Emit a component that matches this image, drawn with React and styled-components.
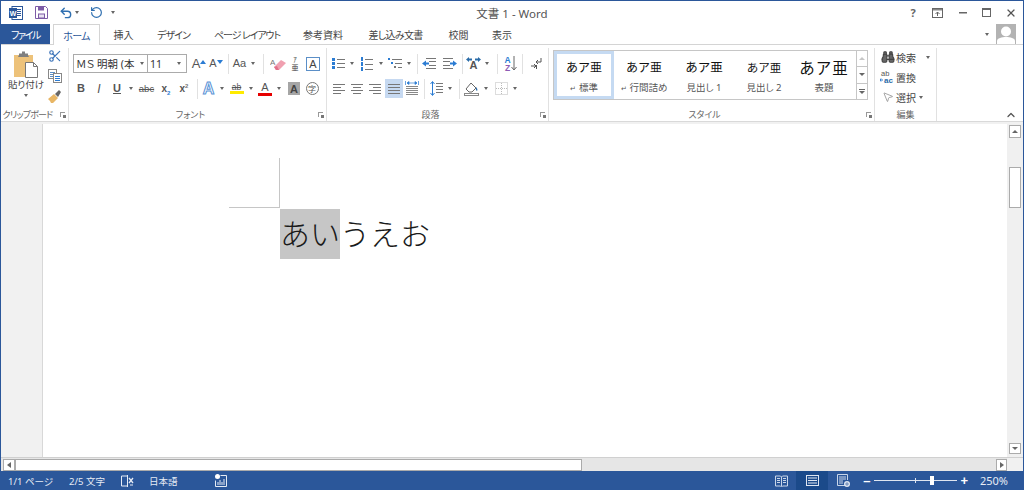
import styled, { createGlobalStyle } from "styled-components";
import { Scissors, Binoculars, MousePointer2, Undo2, RotateCcw, ChevronUp, X } from "lucide-react";

const BLUE = "#2b579a";
const SANS = `"Noto Sans", "Noto Sans CJK JP", sans-serif`;
const JP = `"Noto Sans CJK JP", sans-serif`;

const Global = createGlobalStyle`
  html, body { margin: 0; padding: 0; height: 100%; overflow: hidden; }
  body { font-family: ${SANS}; font-feature-settings: "palt"; color: #444; }
  #root { height: 100%; }
`;

const Win = styled.div`
  height: 490px;
  box-sizing: border-box;
  border: 1px solid ${BLUE};
  border-bottom: 0;
  display: flex;
  flex-direction: column;
  background: #fff;
`;

/* title bar */
const TitleBar = styled.div`
  height: 23px;
  flex: none;
  display: grid;
  grid-template-columns: 1fr auto 1fr;
  align-items: center;
`;
const Qat = styled.div`
  display: flex;
  align-items: center;
  padding-left: 8px;
`;
const Title = styled.div`
  font-size: 11.5px;
  color: #555;
`;
const WinBtns = styled.div`
  display: flex;
  justify-content: flex-end;
  align-items: center;
`;
const Cell = styled.div`
  width: ${(p) => p.$w || 18}px;
  height: ${(p) => p.$h || 19}px;
  margin-left: ${(p) => p.$ml || 0}px;
  flex: none;
  display: flex;
  align-items: center;
  justify-content: center;
  background: ${(p) => (p.$on ? "#c6d9f1" : "transparent")};
`;
const Help = styled.span`
  font-size: 11px;
  font-weight: 700;
  color: #666;
`;

/* tabs */
const TabRow = styled.div`
  height: 21px;
  flex: none;
  box-sizing: border-box;
  display: flex;
  border-bottom: 1px solid #d4d4d4;
`;
const FileTab = styled.div`
  width: 49px;
  height: 20px;
  background: ${BLUE};
  color: #fff;
  font-size: 10px;
  letter-spacing: -1.4px;
  display: flex;
  align-items: center;
  justify-content: center;
  margin-right: 3px;
`;
const Tab = styled.div`
  width: ${(p) => p.$w}px;
  height: ${(p) => (p.$active ? 21 : 20)}px;
  box-sizing: border-box;
  font-size: 10px;
  letter-spacing: ${(p) => p.$ls || 0}px;
  white-space: nowrap;
  display: flex;
  align-items: center;
  justify-content: center;
  color: ${(p) => (p.$active ? BLUE : "#444")};
  background: #fff;
  ${(p) => p.$active && `border: 1px solid #d4d4d4; border-bottom: 0;`}
`;
const Account = styled.div`
  margin-left: auto;
  display: flex;
  align-items: flex-start;
  gap: 6px;
  padding-right: 7px;
`;
const Avatar = styled.div`
  width: 20px;
  height: 20px;
  background: #b3b3b3;
  overflow: hidden;
`;

/* ribbon */
const Ribbon = styled.div`
  height: 77px;
  flex: none;
  box-sizing: border-box;
  display: flex;
  align-items: flex-start;
  border-bottom: 1px solid #d9d9d9;
`;
const Strip = styled.div`
  height: 2px;
  flex: none;
  background: #f1f1f1;
`;
const Group = styled.div`
  width: ${(p) => p.$w}px;
  height: 73px;
  margin-top: 3px;
  flex: none;
  box-sizing: border-box;
  border-right: 1px solid #e1e1e1;
  display: flex;
  flex-direction: column;
`;
const Body = styled.div`
  flex: 1;
  min-height: 0;
  display: flex;
  flex-direction: ${(p) => p.$dir || "column"};
  padding-top: ${(p) => p.$pt ?? 6}px;
  padding-left: ${(p) => p.$pl || 0}px;
  gap: ${(p) => p.$gap || 0}px;
`;
const GroupLabel = styled.div`
  height: 12px;
  flex: none;
  position: relative;
  box-sizing: border-box;
  padding-right: ${(p) => (p.$launcher ? 14 : 0)}px;
  font-size: 9px;
  line-height: 12px;
  letter-spacing: ${(p) => p.$ls || 0}px;
  color: #666;
  text-align: center;
  white-space: nowrap;
`;
const Launcher = styled.span`
  position: absolute;
  right: 3px;
  top: 3px;
  width: 5px;
  height: 5px;
  box-sizing: border-box;
  border-left: 1px solid #999;
  border-top: 1px solid #999;
  &::after {
    content: "";
    position: absolute;
    right: -1px;
    bottom: -1px;
    width: 3px;
    height: 3px;
    background: #777;
  }
`;
const ToolRow = styled.div`
  height: 19px;
  display: flex;
  align-items: center;
  padding-left: ${(p) => p.$pl || 0}px;
  margin-bottom: ${(p) => p.$mb || 0}px;
`;
const Sep = styled.div`
  width: 1px;
  height: 20px;
  flex: none;
  background: #e1e1e1;
  margin-left: ${(p) => p.$ml || 0}px;
`;
const Drop = styled.div`
  width: ${(p) => p.$w || 6}px;
  margin-left: ${(p) => p.$ml || 0}px;
  flex: none;
  display: flex;
  justify-content: center;
  &::after {
    content: "";
    border-left: 2.5px solid transparent;
    border-right: 2.5px solid transparent;
    border-top: 3px solid #666;
  }
`;
const Combo = styled.div`
  width: ${(p) => p.$w}px;
  height: 19px;
  flex: none;
  box-sizing: border-box;
  border: 1px solid #ababab;
  margin-left: ${(p) => p.$ml || 0}px;
  display: flex;
  align-items: center;
  justify-content: space-between;
  padding: 0 2px;
  font-size: 10.5px;
  color: #333;
  white-space: nowrap;
`;
const Letter = styled.span`
  font-family: "Liberation Sans", sans-serif;
  font-size: ${(p) => p.$s || 11}px;
  font-weight: ${(p) => p.$b || 400};
  font-style: ${(p) => (p.$i ? "italic" : "normal")};
  color: ${(p) => p.$c || "#555"};
  text-decoration: ${(p) => p.$d || "none"};
  line-height: 1;
`;
const OutlineA = styled.span`
  font-family: "Liberation Sans", sans-serif;
  font-size: 16px;
  font-weight: 700;
  line-height: 1;
  color: #fff;
  -webkit-text-stroke: 1px #5b93d6;
`;
const Raised = styled.sup`
  font-size: 6px;
  color: ${(p) => p.$c || "#777"};
  line-height: 0;
  vertical-align: ${(p) => p.$v || "super"};
`;
const ColorA = styled.span`
  width: 14px;
  display: flex;
  flex-direction: column;
  align-items: center;
  font-family: "Liberation Sans", sans-serif;
  font-size: 11px;
  line-height: 11px;
  color: #555;
  &::after {
    content: "";
    width: 14px;
    height: 3px;
    background: ${(p) => p.$c};
  }
`;
const BoxA = styled.span`
  width: 14px;
  height: 14px;
  box-sizing: border-box;
  border: 1px solid #5b8fc7;
  display: flex;
  align-items: center;
  justify-content: center;
  font-family: "Liberation Sans", sans-serif;
  font-size: 11px;
  color: #444;
`;
const ShadeA = styled(BoxA)`
  width: 12px;
  height: 13px;
  border: 0;
  background: #a6a6a6;
  font-weight: 700;
`;
const RingChar = styled.span`
  width: 13px;
  height: 13px;
  flex: none;
  box-sizing: border-box;
  border: 1px solid #777;
  border-radius: 50%;
  display: flex;
  align-items: center;
  justify-content: center;
  font-size: 8px;
  color: #555;
`;
const RubyChar = styled.span`
  font-size: 7px;
  line-height: 8px;
  text-align: center;
  color: #444;
  display: flex;
  flex-direction: column;
`;
const Grow = styled.span`
  align-self: flex-start;
  margin-top: 4px;
  line-height: 0;
`;

/* clipboard */
const PasteCol = styled.div`
  width: 44px;
  margin-left: 3px;
  display: flex;
  flex-direction: column;
  align-items: center;
  padding-top: 3px;
  flex: none;
`;
const PasteText = styled.div`
  font-size: 9.5px;
  line-height: 13px;
  color: #444;
  white-space: nowrap;
`;
const PasteDrop = styled(Drop)`
  margin-top: 3px;
`;
const SmallCol = styled.div`
  width: 14px;
  flex: none;
  display: flex;
  flex-direction: column;
  gap: 4px;
`;
const SmallCell = styled.div`
  height: 16px;
  display: flex;
  align-items: center;
  justify-content: center;
`;

/* styles gallery */
const Gallery = styled.div`
  width: 315px;
  height: 50px;
  box-sizing: border-box;
  border: 1px solid #c6c6c6;
  display: flex;
`;
const StyleCard = styled.div`
  width: 60px;
  flex: none;
  box-sizing: border-box;
  overflow: hidden;
  display: flex;
  flex-direction: column;
  align-items: center;
  font-feature-settings: normal;
  border: ${(p) => (p.$on ? "3px solid #c5daf2" : "3px solid transparent")};
`;
const Sample = styled.div`
  height: 25px;
  display: flex;
  align-items: center;
  white-space: nowrap;
  font-family: ${JP};
  font-weight: 400;
  color: #111;
  font-size: ${(p) => p.$s || 12}px;
  letter-spacing: ${(p) => p.$ls || 0}px;
`;
const StyleName = styled.div`
  margin-top: 2px;
  font-size: 9.5px;
  line-height: 14px;
  color: #555;
  white-space: nowrap;
  font-feature-settings: "palt";
`;
const Return = styled.span`
  font-size: 7px;
  margin-right: 3px;
`;
const GalleryScroll = styled.div`
  flex: 1;
  display: flex;
  flex-direction: column;
  margin-left: 2px;
  border-left: 1px solid #c6c6c6;
`;
const GalleryBtn = styled.div`
  flex: 1;
  display: flex;
  flex-direction: column;
  align-items: center;
  justify-content: center;
  border-bottom: ${(p) => (p.$last ? 0 : "1px solid #c6c6c6")};
`;
const Tri = styled.span`
  border-left: 3px solid transparent;
  border-right: 3px solid transparent;
  ${(p) => (p.$up ? `border-bottom: 3px solid ${p.$c || "#666"};` : `border-top: 3px solid ${p.$c || "#666"};`)}
`;
const MoreBar = styled.span`
  width: 6px;
  height: 1px;
  background: #666;
  margin-bottom: 1px;
`;

/* edit */
const EditRow = styled.div`
  height: 16px;
  display: flex;
  align-items: center;
  font-size: 10px;
  color: #444;
  white-space: nowrap;
`;
const EditIcon = styled.div`
  width: 21px;
  padding-left: 4px;
  box-sizing: border-box;
  display: flex;
  justify-content: center;
  flex: none;
`;
const Collapse = styled.div`
  flex: 1;
  align-self: flex-end;
  display: flex;
  justify-content: flex-end;
  padding-right: 6px;
`;

/* document */
const DocArea = styled.div`
  flex: 1;
  min-height: 0;
  display: flex;
`;
const Gutter = styled.div`
  width: 41px;
  flex: none;
  background: #f1f1f1;
  border-right: 1px solid #d8d8d8;
`;
const Page = styled.div`
  flex: 1;
  padding: 34px 0 0 186px;
`;
const CropMark = styled.div`
  width: 50px;
  height: 49px;
  border-right: 1px solid #c6c6c6;
  border-bottom: 1px solid #c6c6c6;
`;
const TextLine = styled.div`
  margin: 1px 0 0 51px;
  height: 50px;
  display: flex;
  align-items: center;
  font-family: ${JP};
  font-feature-settings: normal;
  font-weight: 300;
  font-size: 30px;
  color: #1a1a1a;
  white-space: nowrap;
`;
const Glyphs = styled.span`
  position: relative;
  top: -2px;
`;
const Selected = styled.span`
  background: #c6c6c6;
  height: 50px;
  display: flex;
  align-items: center;
`;
const VScroll = styled.div`
  width: 16px;
  flex: none;
  background: #f0f0f0;
  padding: 1px 2px 3px;
  box-sizing: border-box;
  display: flex;
  flex-direction: column;
`;
const SBtn = styled.div`
  width: ${(p) => p.$w || 12}px;
  height: ${(p) => p.$h || 12}px;
  flex: none;
  box-sizing: border-box;
  background: #fff;
  border: 1px solid #ababab;
  display: flex;
  align-items: center;
  justify-content: center;
`;
const VThumb = styled.div`
  height: 41px;
  margin-top: 29px;
  box-sizing: border-box;
  background: #fff;
  border: 1px solid #ababab;
`;
const Fill = styled.div`
  flex: 1;
`;
const HScroll = styled.div`
  height: 14px;
  flex: none;
  box-sizing: border-box;
  display: flex;
  align-items: center;
  background: #e6e6e6;
  padding-left: 2px;
  border-top: 1px solid #d0d0d0;
`;
const HThumb = styled.div`
  width: 567px;
  height: 12px;
  box-sizing: border-box;
  background: #fff;
  border: 1px solid #ababab;
  flex: none;
`;
const Corner = styled.div`
  width: 16px;
  height: 13px;
  flex: none;
  background: #f1f1f1;
`;
const TriSide = styled.span`
  border-top: 3px solid transparent;
  border-bottom: 3px solid transparent;
  ${(p) => (p.$left ? "border-right: 4px solid #666;" : "border-left: 4px solid #666;")}
`;

/* status bar */
const Status = styled.div`
  height: 19px;
  flex: none;
  background: ${BLUE};
  color: #e6ecf5;
  font-size: 9.5px;
  display: flex;
  align-items: center;
  padding-left: 7px;
  white-space: nowrap;
`;
const StatusText = styled.span`
  margin-left: ${(p) => p.$ml || 0}px;
  margin-right: ${(p) => p.$mr || 0}px;
  font-size: ${(p) => p.$s || 9.5}px;
`;
const StatusIcon = styled.div`
  margin-left: ${(p) => p.$ml || 0}px;
  width: ${(p) => p.$w || 14}px;
  height: 19px;
  flex: none;
  display: flex;
  align-items: center;
  justify-content: center;
  background: ${(p) => (p.$on ? "#1b4a8a" : "transparent")};
`;
const ZoomTrack = styled.div`
  width: 83px;
  height: 1px;
  margin-left: 4px;
  background: #dfe6f1;
  position: relative;
`;
const ZoomTick = styled.span`
  position: absolute;
  left: 41px;
  top: -2px;
  width: 1px;
  height: 5px;
  background: #dfe6f1;
`;
const ZoomThumb = styled.span`
  position: absolute;
  left: 56px;
  top: -4px;
  width: 4px;
  height: 9px;
  background: #fff;
`;
const ZoomSign = styled.span`
  font-size: 13px;
  font-weight: 700;
  color: #fff;
  font-family: "Liberation Sans", sans-serif;
  margin-left: ${(p) => p.$ml || 0}px;
`;

/* icons */
const Lines = ({ x = 0, ys, w = 9, c = "#777" }) =>
  ys.map((y, i) => <rect key={i} x={x} y={y} width={w} height="1" fill={c} />);

const WordLogo = () => (
  <svg width="14" height="14" viewBox="0 0 14 14">
    <rect x="3" y="0.5" width="10.5" height="13" fill="#fff" stroke="#2b579a" />
    <Lines x={8} ys={[3, 5, 7, 9]} w={4} c="#2b579a" />
    <rect x="0" y="2" width="8" height="10" fill="#2b579a" />
    <text x="4" y="10" fontSize="7" fill="#fff" textAnchor="middle" fontFamily="Liberation Sans" fontWeight="700">W</text>
  </svg>
);
const SaveIcon = () => (
  <svg width="13" height="13" viewBox="0 0 13 13">
    <path d="M.5.5h10l2 2v10H.5z" fill="#fff" stroke="#7d5ba6" />
    <rect x="3" y="1" width="6" height="3.5" fill="#7d5ba6" />
    <rect x="3" y="7.5" width="7" height="5" fill="#7d5ba6" />
    <rect x="4" y="8.5" width="5" height="3" fill="#e9e3f1" />
  </svg>
);
const PasteIcon = () => (
  <svg width="26" height="27" viewBox="0 0 26 27">
    <rect x="1" y="4" width="19" height="22" fill="#edc27a" />
    <path d="M6 4V2.500h3V.5h3v2h3V4l1 2H5z" fill="#7f7f7f" />
    <path d="M12.500 11.500h8l4 4v11h-12z" fill="#fff" stroke="#777" />
    <path d="M20.500 11.500v4h4" fill="none" stroke="#777" />
  </svg>
);
const CopyIcon = () => (
  <svg width="14" height="14" viewBox="0 0 14 14">
    <rect x=".5" y=".5" width="8" height="9" fill="#fff" stroke="#888" />
    <Lines x={2} ys={[3, 5, 7]} w={5} c="#5b8fc7" />
    <rect x="5.500" y="4.500" width="8" height="9" fill="#fff" stroke="#888" />
    <Lines x={7} ys={[7, 9, 11]} w={5} c="#2b7cd3" />
  </svg>
);
const BrushIcon = () => (
  <svg width="14" height="14" viewBox="0 0 14 14">
    <path d="M0 10l6-5 4 4-5 5H3l-1-2z" fill="#e8b665" />
    <path d="M7 5l4-4 2 2-3 5z" fill="#666" />
  </svg>
);
const GrowIcon = ({ up }) => (
  <svg width="6" height="4" viewBox="0 0 6 4">
    <path d={up ? "M0 4l3-4 3 4z" : "M0 0l3 4 3-4z"} fill="#2b7cd3" />
  </svg>
);
const Eraser = () => (
  <svg width="17" height="14" viewBox="0 0 17 14">
    <text x="0" y="8" fontSize="8" fontFamily="Liberation Sans" fill="#777">A</text>
    <path d="M4 10l7-7 5 3-7 7H6z" fill="#f0a0b0" />
    <path d="M4 10l2 3h3l-2-4z" fill="#e2708a" />
  </svg>
);
const Bullets = () => (
  <svg width="13" height="13" viewBox="0 0 13 13">
    {[1, 5, 9].map((y) => <rect key={y} x="0" y={y} width="3" height="3" fill="#2b7cd3" />)}
    <Lines x={5} ys={[2, 6, 10]} w={8} c="#777" />
  </svg>
);
const Numbers = () => (
  <svg width="13" height="14" viewBox="0 0 13 14">
    {[0, 5, 10].map((y) => <rect key={y} x="1" y={y} width="2" height="4" fill="#2b7cd3" />)}
    <Lines x={5} ys={[2, 7, 12]} w={8} c="#777" />
  </svg>
);
const Multi = () => (
  <svg width="14" height="13" viewBox="0 0 14 13">
    <rect x="0" y="1" width="2" height="2" fill="#2b7cd3" />
    <rect x="3" y="5" width="2" height="2" fill="#2b7cd3" />
    <rect x="6" y="9" width="2" height="2" fill="#777" />
    <Lines x={4} ys={[2]} w={10} />
    <Lines x={7} ys={[6]} w={7} />
    <Lines x={10} ys={[10]} w={4} />
  </svg>
);
const Indent = ({ flip }) => (
  <svg width="14" height="11" viewBox="0 0 14 11">
    <Lines x={flip ? 0 : 4} ys={[0, 10]} w={10} />
    <Lines x={flip ? 0 : 7} ys={[3, 7]} w={7} />
    <path d={flip ? "M14 5.500L10 2.500v2H7v2h3v2z" : "M0 5.500L4 2.500v2h3v2H4v2z"} fill="#2b7cd3" />
  </svg>
);
const SpacingIcon = () => (
  <svg width="15" height="13" viewBox="0 0 15 13">
    <text x="7.500" y="12" fontSize="11" fontWeight="700" textAnchor="middle" fontFamily="Liberation Sans" fill="#555">A</text>
    <path d="M0 2.500L3 0v1.500h3v2H3V5zM15 2.500L12 0v1.500H9v2h3V5z" fill="#2b6ca8" />
  </svg>
);
const SortIcon = () => (
  <svg width="13" height="16" viewBox="0 0 13 16">
    <text x="3.500" y="7" fontSize="8.500" fontWeight="700" textAnchor="middle" fontFamily="Liberation Sans" fill="#2b7cd3">A</text>
    <text x="3.500" y="15" fontSize="8.500" fontWeight="700" textAnchor="middle" fontFamily="Liberation Sans" fill="#8e5cb5">Z</text>
    <path d="M10 0v13M7.500 11l2.500 3 2.500-3" fill="none" stroke="#666" />
  </svg>
);
const Pilcrow = () => (
  <svg width="11" height="11" viewBox="0 0 11 11">
    <path d="M10 0v4H5M5 4l2-2M5 4l2 2" fill="none" stroke="#555" />
    <path d="M0 8h5M5 8L3 6M5 8l-2 2" fill="none" stroke="#555" />
    <rect x="5" y="7" width="1" height="4" fill="#555" />
  </svg>
);
const Align = ({ kind }) => {
  const rows = kind === "left" ? [[0, 12], [0, 8], [0, 12], [0, 8]]
    : kind === "center" ? [[0, 12], [2, 8], [0, 12], [2, 8]]
    : kind === "right" ? [[0, 12], [4, 8], [0, 12], [4, 8]]
    : [[0, 12], [0, 12], [0, 12], [0, 12]];
  return (
    <svg width="12" height="10" viewBox="0 0 12 10">
      {rows.map(([x, w], i) => <rect key={i} x={x} y={i * 3} width={w} height="1" fill="#777" />)}
    </svg>
  );
};
const Distributed = () => (
  <svg width="14" height="15" viewBox="0 0 14 15">
    {[5, 7, 9, 11, 13].map((y) => <rect key={y} x="1" y={y} width="12" height="1" fill="#888" />)}
    <path d="M0 0v4M14 0v4" stroke="#2b7cd3" strokeWidth="1.400" />
    <path d="M2 2h10M2 2l2-1.500v3zM12 2l-2-1.500v3z" fill="#2b7cd3" stroke="#2b7cd3" strokeWidth=".7" />
  </svg>
);
const LineSpacing = () => (
  <svg width="13" height="15" viewBox="0 0 13 15">
    <path d="M2.500 1v13M.5 3l2-2.500L4.500 3M.5 12l2 2.500 2-2.500" fill="none" stroke="#2b7cd3" />
    <Lines x={6} ys={[2, 5, 8, 11]} w={7} />
  </svg>
);
const Bucket = () => (
  <svg width="15" height="15" viewBox="0 0 15 15">
    <path d="M2 8l5-6 5 5-4 4H5z" fill="#fff" stroke="#666" />
    <path d="M12 6c1 1 2 3 1 4-1-.5-1.500-2.500-1-4z" fill="#2b6ca8" />
    <rect x=".5" y="12.500" width="14" height="2" fill="#fff" stroke="#888" />
  </svg>
);
const BorderIcon = () => (
  <svg width="13" height="13" viewBox="0 0 13 13">
    <rect x=".5" y=".5" width="12" height="12" fill="none" stroke="#bbb" strokeDasharray="1 1" />
    <path d="M6.500 1v11M1 6.500h11" stroke="#bbb" strokeDasharray="1 1" />
  </svg>
);
const RibbonDisplay = () => (
  <svg width="11" height="10" viewBox="0 0 11 10">
    <rect x=".5" y=".5" width="10" height="9" fill="none" stroke="#666" />
    <rect x="1" y="1" width="9" height="1.500" fill="#888" />
    <path d="M5.500 8V4M3.500 6l2-2 2 2" fill="none" stroke="#666" />
  </svg>
);
const Person = () => (
  <svg width="20" height="20" viewBox="0 0 20 20">
    <circle cx="10" cy="7.500" r="5" fill="#fff" />
    <path d="M1 20v-3c0-3 5-4 9-4s9 1 9 4v3z" fill="#fff" />
  </svg>
);
const AbAc = () => (
  <svg width="15" height="14" viewBox="0 0 15 14">
    <text x="1" y="6" fontSize="7.500" fontFamily="Liberation Sans" fill="#555">ab</text>
    <text x="4" y="13" fontSize="8" fontFamily="Liberation Sans" fontWeight="700" fill="#2b6ca8">ac</text>
    <path d="M0 10h3M1 8.500L0 10l1 1.500" fill="none" stroke="#2b7cd3" />
  </svg>
);
const Proofing = () => (
  <svg width="13" height="12" viewBox="0 0 13 12">
    <path d="M6.500 1H.5v10h6M6.500 0v12" fill="none" stroke="#e6ecf5" />
    <path d="M8 3l4 5M12 3L8 8" stroke="#e6ecf5" strokeWidth="1.300" />
    <path d="M9 10h3" stroke="#e6ecf5" />
  </svg>
);
const MacroIcon = () => (
  <svg width="12" height="13" viewBox="0 0 12 13">
    <circle cx="2.500" cy="2.500" r="2.500" fill="#fff" />
    <path d="M5.500 1.500H11.500V12.500H.5V6.500" fill="none" stroke="#e6ecf5" />
    <path d="M3 11V8M5 11V6M7 11V8M9 11V5" stroke="#e6ecf5" />
  </svg>
);
const ReadIcon = () => (
  <svg width="13" height="12" viewBox="0 0 13 12">
    <path d="M.5 1h5l1 1 1-1h5v10h-5l-1 1-1-1h-5z" fill="none" stroke="#c9d6e9" />
    <path d="M6.500 2v9M2 3.500h3M2 5.500h3M2 7.500h3M8 3.500h3M8 5.500h3M8 7.500h3" stroke="#c9d6e9" />
  </svg>
);
const PrintIcon = () => (
  <svg width="13" height="11" viewBox="0 0 13 11">
    <rect x=".5" y=".5" width="12" height="10" fill="none" stroke="#dfe6f1" />
    <path d="M2 3h9M2 5.500h9M2 8h9" stroke="#dfe6f1" />
  </svg>
);
const WebIcon = () => (
  <svg width="13" height="13" viewBox="0 0 13 13">
    <path d="M8 11.500H.5v-11h10V6" fill="none" stroke="#c9d6e9" />
    <path d="M2 3h7M2 5h7M2 7h4M2 9h4" stroke="#c9d6e9" />
    <circle cx="10" cy="10" r="3" fill="#dfe6f1" />
    <path d="M8 10h4M10 8v4" stroke="#2b579a" strokeWidth=".6" />
  </svg>
);

const Label = ({ children, launcher, ls }) => (
  <GroupLabel $launcher={launcher} $ls={ls}>
    {children}
    {launcher && <Launcher />}
  </GroupLabel>
);

const styleCards = [
  { name: "標準", ret: true, on: true },
  { name: "行間詰め", ret: true },
  { name: "見出し 1", s: 12.500 },
  { name: "見出し 2", s: 11.500 },
  { name: "表題", s: 15.500, ls: 1 },
];

export default function App() {
  return (
    <>
      <Global />
      <Win>
        <TitleBar>
          <Qat>
            <WordLogo />
            <Cell $w={13} $ml={12}><SaveIcon /></Cell>
            <Cell $w={14} $ml={11}><Undo2 size={14} strokeWidth={2.400} color="#2f6fb0" /></Cell>
            <Drop $w={8} />
            <Cell $w={14} $ml={8}><RotateCcw size={13} strokeWidth={2.200} color="#2f6fb0" /></Cell>
            <Drop $ml={7} />
          </Qat>
          <Title>文書 1 - Word</Title>
          <WinBtns>
            <Cell $w={18}><Help>?</Help></Cell>
            <Cell $w={30}><RibbonDisplay /></Cell>
            <Cell $w={21}>
              <svg width="8" height="2" viewBox="0 0 8 2"><rect width="8" height="1.500" fill="#666" /></svg>
            </Cell>
            <Cell $w={26}>
              <svg width="9" height="9" viewBox="0 0 9 9"><rect x=".5" y=".5" width="8" height="8" fill="none" stroke="#666" /><rect width="9" height="2" fill="#666" /></svg>
            </Cell>
            <Cell $w={24}><X size={12} strokeWidth={2.400} color="#555" /></Cell>
          </WinBtns>
        </TitleBar>

        <TabRow>
          <FileTab>ファイル</FileTab>
          <Tab $w={47} $active $ls={-0.7}>ホーム</Tab>
          <Tab $w={47}>挿入</Tab>
          <Tab $w={53} $ls={-1}>デザイン</Tab>
          <Tab $w={94} $ls={-1.1}>ページ レイアウト</Tab>
          <Tab $w={58}>参考資料</Tab>
          <Tab $w={87} $ls={-0.7}>差し込み文書</Tab>
          <Tab $w={39}>校閲</Tab>
          <Tab $w={48}>表示</Tab>
          <Account>
            <Cell $w={6} $h={20}><Drop /></Cell>
            <Avatar><Person /></Avatar>
          </Account>
        </TabRow>

        <Ribbon>
          <Group $w={68}>
            <Body $dir="row" $pt={0}>
              <PasteCol>
                <PasteIcon />
                <PasteText>貼り付け</PasteText>
                <PasteDrop />
              </PasteCol>
              <SmallCol>
                <SmallCell><Scissors size={14} color="#3b73b9" /></SmallCell>
                <SmallCell><CopyIcon /></SmallCell>
                <SmallCell><BrushIcon /></SmallCell>
              </SmallCol>
            </Body>
            <Label launcher ls={-0.8}>クリップボード</Label>
          </Group>

          <Group $w={258}>
            <Body>
              <ToolRow $pl={4} $mb={6}>
                <Combo $w={75}>
                  <span>ＭＳ 明朝 (本</span>
                  <Drop />
                </Combo>
                <Combo $w={40} $ml={-1}>
                  <span>11</span>
                  <Drop $w={10} />
                </Combo>
                <Cell $w={18} $ml={3}><Letter $s={13}>A</Letter><Grow><GrowIcon up /></Grow></Cell>
                <Cell $w={16}><Letter $s={11}>A</Letter><Grow><GrowIcon /></Grow></Cell>
                <Sep $ml={4} />
                <Cell $w={21}><Letter $s={11}>Aa</Letter></Cell>
                <Drop />
                <Sep $ml={7} />
                <Cell $w={22} $ml={3}><Eraser /></Cell>
                <Cell $w={12}><RubyChar><span>ｱ</span><span>亜</span></RubyChar></Cell>
                <Cell $w={24}><BoxA>A</BoxA></Cell>
              </ToolRow>
              <ToolRow $pl={3}>
                <Cell><Letter $b={700} $s={11}>B</Letter></Cell>
                <Cell><Letter $i $s={12}>I</Letter></Cell>
                <Cell><Letter $d="underline" $b={700} $s={11}>U</Letter></Cell>
                <Drop $w={10} />
                <Cell $w={21}><Letter $d="line-through" $s={9.500}>abc</Letter></Cell>
                <Cell><Letter $b={700} $s={10}>x<Raised $c="#2b7cd3" $v="sub">2</Raised></Letter></Cell>
                <Cell><Letter $b={700} $s={10}>x<Raised>2</Raised></Letter></Cell>
                <Sep $ml={4} />
                <Cell $w={21}><OutlineA>A</OutlineA></Cell>
                <Drop />
                <Cell $w={23}><ColorA $c="#ffeb00"><Letter $s={8.500} $d="line-through">ab</Letter></ColorA></Cell>
                <Drop />
                <Cell $w={22}><ColorA $c="#e60000">A</ColorA></Cell>
                <Drop />
                <Cell $w={24}><ShadeA>A</ShadeA></Cell>
                <Cell $w={12}><RingChar>字</RingChar></Cell>
              </ToolRow>
            </Body>
            <Label launcher>フォント</Label>
          </Group>

          <Group $w={222}>
            <Body>
              <ToolRow $mb={6}>
                <Cell $w={22}><Bullets /></Cell>
                <Drop />
                <Cell $w={23}><Numbers /></Cell>
                <Drop />
                <Cell $w={22}><Multi /></Cell>
                <Drop />
                <Sep $ml={5} />
                <Cell $w={22}><Indent /></Cell>
                <Cell $w={20}><Indent flip /></Cell>
                <Sep $ml={2} />
                <Cell $w={21}><SpacingIcon /></Cell>
                <Drop />
                <Sep $ml={7} />
                <Cell $w={24}><SortIcon /></Cell>
                <Sep />
                <Cell $w={26}><Pilcrow /></Cell>
              </ToolRow>
              <ToolRow $pl={3}>
                <Cell><Align kind="left" /></Cell>
                <Cell><Align kind="center" /></Cell>
                <Cell><Align kind="right" /></Cell>
                <Cell $on $ml={1}><Align kind="justify" /></Cell>
                <Cell><Distributed /></Cell>
                <Sep $ml={3} />
                <Cell $w={22}><LineSpacing /></Cell>
                <Drop />
                <Sep $ml={6} />
                <Cell $w={23}><Bucket /></Cell>
                <Drop />
                <Cell $w={22} $ml={1}><BorderIcon /></Cell>
                <Drop />
              </ToolRow>
            </Body>
            <Label launcher>段落</Label>
          </Group>

          <Group $w={326}>
            <Body $pt={2} $pl={4}>
              <Gallery>
                {styleCards.map((c) => (
                  <StyleCard key={c.name} $on={c.on}>
                    <Sample $s={c.s} $ls={c.ls}>あア亜</Sample>
                    <StyleName>
                      {c.ret && <Return>↵</Return>}
                      {c.name}
                    </StyleName>
                  </StyleCard>
                ))}
                <GalleryScroll>
                  <GalleryBtn><Tri $up $c="#c6c6c6" /></GalleryBtn>
                  <GalleryBtn><Tri /></GalleryBtn>
                  <GalleryBtn $last><MoreBar /><Tri /></GalleryBtn>
                </GalleryScroll>
              </Gallery>
            </Body>
            <Label launcher>スタイル</Label>
          </Group>

          <Group $w={62}>
            <Body $pt={1} $gap={4}>
              <EditRow>
                <EditIcon><Binoculars size={14} color="#444" fill="#666" strokeWidth={2} /></EditIcon>
                検索
                <Drop $ml={9} />
              </EditRow>
              <EditRow>
                <EditIcon><AbAc /></EditIcon>
                置換
              </EditRow>
              <EditRow>
                <EditIcon><MousePointer2 size={12} color="#777" strokeWidth={1.300} /></EditIcon>
                選択
                <Drop $ml={2} />
              </EditRow>
            </Body>
            <Label>編集</Label>
          </Group>

          <Collapse><ChevronUp size={12} strokeWidth={2.600} color="#555" /></Collapse>
        </Ribbon>
        <Strip />

        <DocArea>
          <Gutter />
          <Page>
            <CropMark />
            <TextLine>
              <Selected><Glyphs>あい</Glyphs></Selected>
              <Glyphs>うえお</Glyphs>
            </TextLine>
          </Page>
          <VScroll>
            <SBtn $h={13}><Tri $up /></SBtn>
            <VThumb />
            <Fill />
            <SBtn $h={11}><Tri /></SBtn>
          </VScroll>
        </DocArea>

        <HScroll>
          <SBtn><TriSide $left /></SBtn>
          <HThumb />
          <Fill />
          <SBtn $w={11}><TriSide /></SBtn>
          <Corner />
        </HScroll>

        <Status>
          <StatusText>1/1 ページ</StatusText>
          <StatusText $ml={16}>2/5 文字</StatusText>
          <StatusIcon $ml={16}><Proofing /></StatusIcon>
          <StatusText $ml={14}>日本語</StatusText>
          <StatusIcon $ml={37}><MacroIcon /></StatusIcon>
          <Fill />
          <StatusIcon><ReadIcon /></StatusIcon>
          <StatusIcon $w={32} $ml={8} $on><PrintIcon /></StatusIcon>
          <StatusIcon $ml={8}><WebIcon /></StatusIcon>
          <ZoomSign $ml={13}>–</ZoomSign>
          <ZoomTrack>
            <ZoomTick />
            <ZoomThumb />
          </ZoomTrack>
          <ZoomSign $ml={3}>+</ZoomSign>
          <StatusText $ml={12} $s={11} $mr={15}>250%</StatusText>
        </Status>
      </Win>
    </>
  );
}
